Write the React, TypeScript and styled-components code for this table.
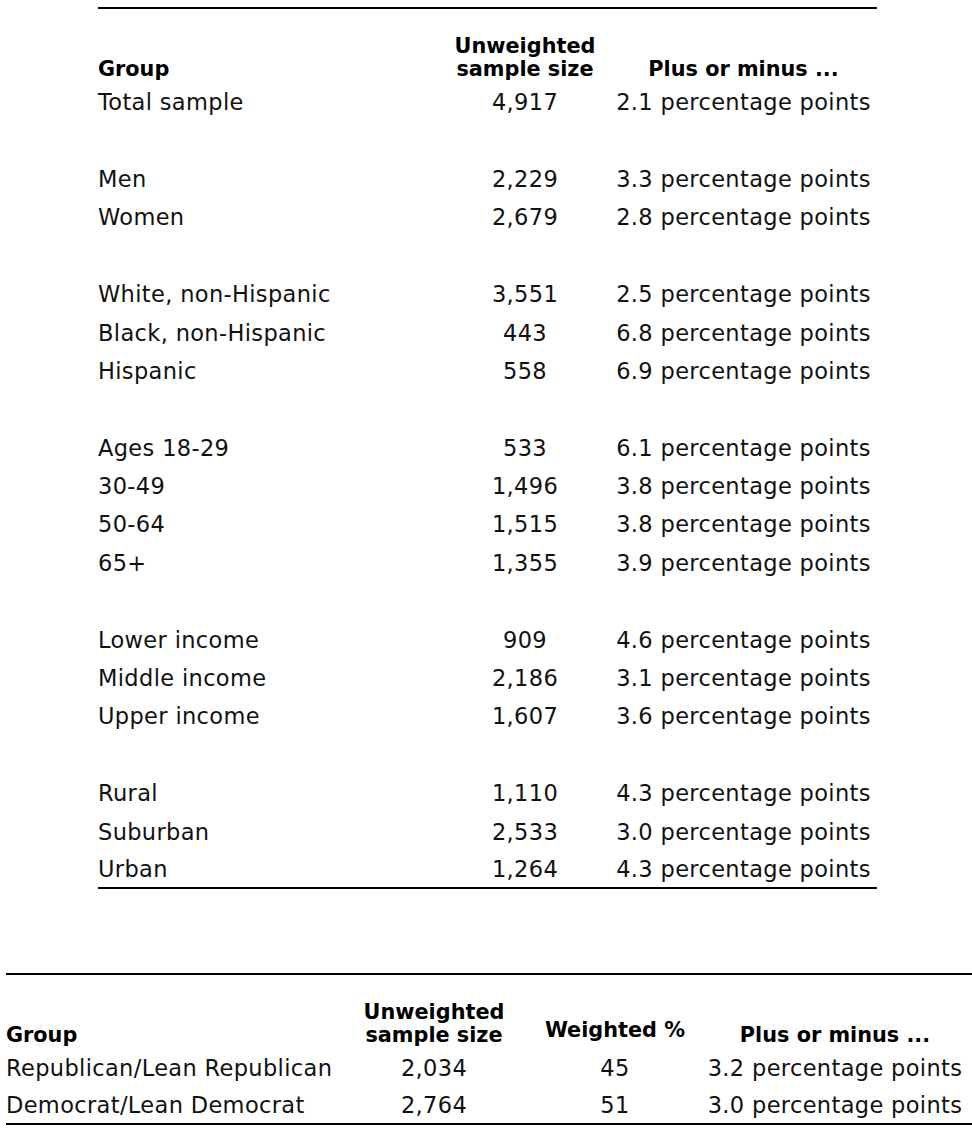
import React from 'react';
import styled, { createGlobalStyle } from 'styled-components';

const GlobalStyle = createGlobalStyle`
  html, body {
    margin: 0;
    padding: 0;
    background: #ffffff;
  }
  body {
    font-family: "DejaVu Sans", "Liberation Sans", sans-serif;
    color: #111111;
  }
`;

const Page = styled.div`
  width: 972px;
  display: flex;
  flex-direction: column;
`;

const Table = styled.section<{ $cols: string; $left: number; $top: number; $width: number }>`
  margin-left: ${p => p.$left}px;
  margin-top: ${p => p.$top}px;
  width: ${p => p.$width}px;
  display: grid;
  grid-template-columns: ${p => p.$cols};
  border-top: 2px solid #000;
  border-bottom: 2px solid #000;
`;

const HeadCell = styled.div<{ $center?: boolean; $lift?: number }>`
  height: 74px;
  display: flex;
  flex-direction: column;
  justify-content: flex-end;
  align-items: ${p => (p.$center ? 'center' : 'flex-start')};
  padding-bottom: ${p => 2 + (p.$lift || 0)}px;
  box-sizing: border-box;
  font-weight: bold;
  font-size: 20.8px;
  line-height: 23px;
  color: #000;
  white-space: nowrap;
  text-align: center;
`;

const Cell = styled.div<{ $center?: boolean; $h: number }>`
  height: ${p => p.$h}px;
  display: flex;
  align-items: center;
  justify-content: ${p => (p.$center ? 'center' : 'flex-start')};
  font-size: 22.5px;
  letter-spacing: 0.35px;
  white-space: nowrap;
`;

const Spacer = styled.div<{ $h: number }>`
  grid-column: 1 / -1;
  height: ${p => p.$h}px;
`;

type Row = [string, string, string] | null;

const groups: Row[] = [
  ['Total sample', '4,917', '2.1'],
  null,
  ['Men', '2,229', '3.3'],
  ['Women', '2,679', '2.8'],
  null,
  ['White, non-Hispanic', '3,551', '2.5'],
  ['Black, non-Hispanic', '443', '6.8'],
  ['Hispanic', '558', '6.9'],
  null,
  ['Ages 18-29', '533', '6.1'],
  ['30-49', '1,496', '3.8'],
  ['50-64', '1,515', '3.8'],
  ['65+', '1,355', '3.9'],
  null,
  ['Lower income', '909', '4.6'],
  ['Middle income', '2,186', '3.1'],
  ['Upper income', '1,607', '3.6'],
  null,
  ['Rural', '1,110', '4.3'],
  ['Suburban', '2,533', '3.0'],
  ['Urban', '1,264', '4.3'],
];

const parties = [
  ['Republican/Lean Republican', '2,034', '45', '3.2'],
  ['Democrat/Lean Democrat', '2,764', '51', '3.0'],
];

const ROW = 38.4;

export default function App() {
  return (
    <Page>
      <GlobalStyle />
      <Table $cols="342px 170px 267px" $left={98} $top={7} $width={779}>
        <HeadCell>Group</HeadCell>
        <HeadCell $center>
          <span>Unweighted</span>
          <span>sample size</span>
        </HeadCell>
        <HeadCell $center>Plus or minus ...</HeadCell>
        {groups.map((g, i) => {
          if (!g) return <Spacer key={i} $h={ROW} />;
          const h = i === groups.length - 1 ? ROW - 2 : ROW;
          return (
            <React.Fragment key={i}>
              <Cell $h={h}>{g[0]}</Cell>
              <Cell $h={h} $center>{g[1]}</Cell>
              <Cell $h={h} $center>{g[2]} percentage points</Cell>
            </React.Fragment>
          );
        })}
      </Table>
      <Table $cols="354px 148px 214px 226px" $left={6} $top={84} $width={966}>
        <HeadCell>Group</HeadCell>
        <HeadCell $center>
          <span>Unweighted</span>
          <span>sample size</span>
        </HeadCell>
        <HeadCell $center $lift={5}>Weighted %</HeadCell>
        <HeadCell $center>Plus or minus ...</HeadCell>
        {parties.map((p, i) => {
          const h = i === parties.length - 1 ? 36 : 38;
          return (
            <React.Fragment key={p[0]}>
              <Cell $h={h}>{p[0]}</Cell>
              <Cell $h={h} $center>{p[1]}</Cell>
              <Cell $h={h} $center>{p[2]}</Cell>
              <Cell $h={h} $center>{p[3]} percentage points</Cell>
            </React.Fragment>
          );
        })}
      </Table>
    </Page>
  );
}
